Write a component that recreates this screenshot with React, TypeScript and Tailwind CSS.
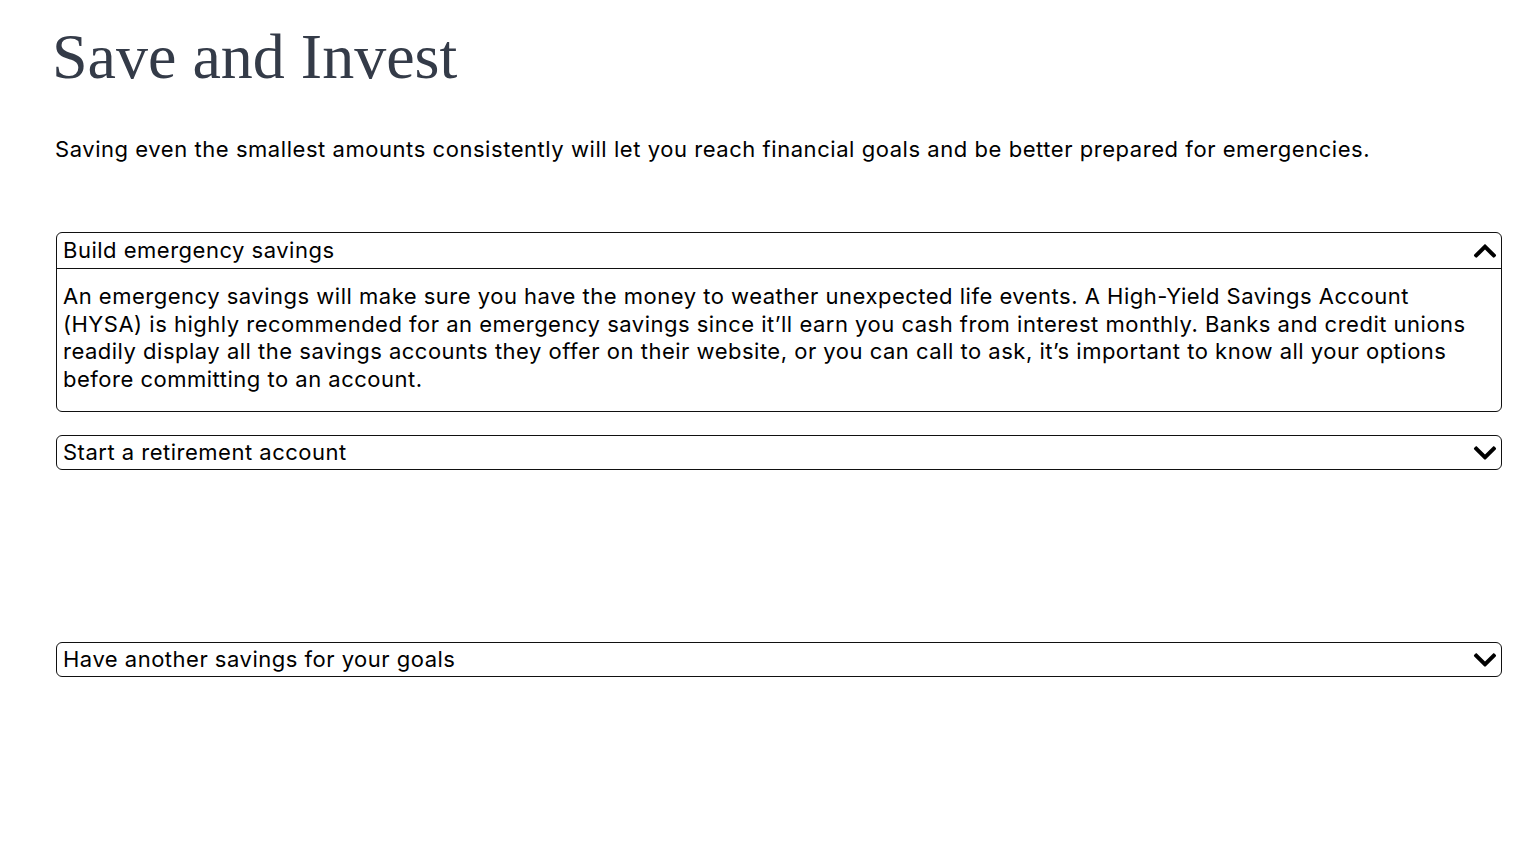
import { FaChevronDown, FaChevronUp } from 'react-icons/fa'

const SECTIONS = [
  {
    title: 'Build emergency savings',
    open: true,
    body: 'An emergency savings will make sure you have the money to weather unexpected life events. A High-Yield Savings Account (HYSA) is highly recommended for an emergency savings since it’ll earn you cash from interest monthly. Banks and credit unions readily display all the savings accounts they offer on their website, or you can call to ask, it’s important to know all your options before committing to an account.',
  },
  { title: 'Start a retirement account', open: false, body: '' },
  { title: 'Have another savings for your goals', open: false, body: '' },
]

export default function App() {
  return (
    <div className="min-h-screen bg-white pl-[52px] pr-[30px] pt-[22px] text-black" style={{ fontFamily: 'Inter, "Liberation Sans", sans-serif' }}>
      <h1 className="text-[64px] leading-[70px] text-[#343b48]" style={{ fontFamily: '"Liberation Serif", "DejaVu Serif", serif' }}>
        Save and Invest
      </h1>
      <p className="mt-[43px] pl-[3px] text-[22px] leading-[28px] tracking-[0.55px]">
        Saving even the smallest amounts consistently will let you reach financial goals and be better prepared for emergencies.
      </p>

      <div className="mt-[69px] pl-[4px]">
        {SECTIONS.map((s, i) => (
          <div
            key={s.title}
            className={`rounded-[6px] border-[1.5px] border-[#111] ${i === 1 ? 'mt-[23px]' : ''} ${i === 2 ? 'mt-[172px]' : ''}`}
          >
            <div className={`flex items-center justify-between pl-[6px] pr-[3px] ${s.open ? 'h-[36px] border-b-[1.5px] border-[#111]' : 'h-[33px]'}`}>
              <span className="text-[22px] tracking-[0.5px]">{s.title}</span>
              {s.open ? <FaChevronUp size={26} /> : <FaChevronDown size={26} />}
            </div>
            {s.open && (
              <p className="px-[6px] pt-[14px] pb-[18px] text-[22px] leading-[27.5px] tracking-[0.5px]">{s.body}</p>
            )}
          </div>
        ))}
      </div>
    </div>
  )
}
